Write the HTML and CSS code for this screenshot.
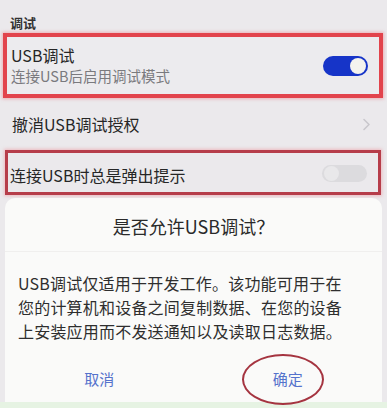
FILE: index.html
```html
<!DOCTYPE html>
<html lang="zh">
<head>
<meta charset="utf-8">
<link rel="stylesheet" href="styles.css">
</head>
<body>
<div class="screen">
  <div class="section-title">调试</div>
  <div class="row boxed">
    <div class="texts">
      <div class="title">USB调试</div>
      <div class="sub">连接USB后启用调试模式</div>
    </div>
    <div class="toggle on"><span class="knob"></span></div>
  </div>
  <div class="row plain">
    <div class="title">撤消USB调试授权</div>
    <svg class="chev" width="9" height="13" viewBox="0 0 9 13"><path d="M2 1.5 L7 6.5 L2 11.5" fill="none" stroke="#c9c7cc" stroke-width="1.6" stroke-linecap="round" stroke-linejoin="round"/></svg>
  </div>
  <div class="row boxed2">
    <div class="title">连接USB时总是弹出提示</div>
    <div class="toggle off"><span class="knob"></span></div>
  </div>
  <div class="dialog">
    <div class="d-title">是否允许USB调试？</div>
    <div class="d-body">USB调试仅适用于开发工作。该功能可用于在您的计算机和设备之间复制数据、在您的设备上安装应用而不发送通知以及读取日志数据。</div>
    <div class="d-buttons">
      <div class="btn">取消</div>
      <div class="btn ok">确定<span class="ring"></span></div>
    </div>
  </div>
  <div class="strip"></div>
</div>
</body>
</html>
```
FILE: styles.css
```css
html, body {
  margin: 0;
  padding: 0;
}
body {
  background: #ebe9ec;
  font-family: "Noto Sans CJK SC", "Noto Sans", sans-serif;
  color: #2a2a2a;
}
.screen {
  width: 387px;
  height: 408px;
  display: flex;
  flex-direction: column;
  overflow: hidden;
}
.section-title {
  height: 33px;
  box-sizing: border-box;
  padding: 14px 0 0 10px;
  font-size: 13px;
  line-height: 18px;
  font-weight: 600;
  color: #333;
}
.row {
  display: flex;
  align-items: center;
  justify-content: space-between;
  box-sizing: border-box;
}
.boxed {
  height: 65px;
  margin: 0 4px 0 3px;
  border: 4px solid #e2434c;
  box-shadow: 0 0 3px 1px rgba(240, 120, 130, 0.5);
  padding: 0 11px 0 4px;
  background: #ecebee;
}
.texts {
  display: flex;
  flex-direction: column;
}
.title {
  font-size: 16px;
  line-height: 20px;
  color: #262626;
}
.sub {
  font-size: 14.5px;
  line-height: 20px;
  color: #7a7a7e;
  margin-top: 1px;
}
.plain {
  height: 52px;
  padding: 0 16px 0 12px;
}
.chev {
  display: block;
}
.boxed2 {
  height: 45px;
  margin: 0 6px 0 5px;
  border: 3px solid #b63d4a;
  box-shadow: 0 0 3px 1px rgba(240, 140, 150, 0.5);
  padding: 4px 11px 0 2px;
}
.toggle {
  width: 45px;
  height: 20px;
  border-radius: 10px;
  position: relative;
  box-sizing: border-box;
}
.toggle.on {
  background: #1634c8;
}
.toggle.off {
  background: #dcdbde;
  height: 17px;
  margin-top: -3px;
}
.knob {
  position: absolute;
  top: 2px;
  width: 16px;
  height: 16px;
  border-radius: 50%;
  background: #f4f3ee;
}
.toggle.on .knob {
  right: 2px;
}
.toggle.off .knob {
  left: 2px;
  top: 1px;
  width: 15px;
  height: 15px;
  background: #e9e8ea;
}
.dialog {
  margin: 3px 5px 0 5px;
  height: 204px;
  background: #fafaf9;
  border-radius: 10px 10px 0 0;
  display: flex;
  flex-direction: column;
}
.d-title {
  height: 54px;
  box-sizing: border-box;
  padding-top: 16px;
  text-align: center;
  font-size: 18px;
  line-height: 24px;
  color: #2a2a2a;
  border-bottom: 1px solid #f0efee;
}
.d-body {
  padding: 19px 30px 0 13px;
  font-size: 16px;
  line-height: 24px;
  letter-spacing: 0.2px;
  color: #2e2e2e;
}
.d-buttons {
  flex: 1;
  display: flex;
  align-items: center;
  padding-top: 12px;
}
.btn {
  flex: 1;
  text-align: center;
  font-size: 15px;
  color: #5572cc;
  position: relative;
}
.ring {
  position: absolute;
  left: 50%;
  top: 50%;
  width: 78px;
  height: 47px;
  margin: -25px 0 0 -46px;
  border: 2px solid #a53440;
  border-radius: 50%;
}
.strip {
  flex: 1;
  background: #e6f3e3;
}
```
